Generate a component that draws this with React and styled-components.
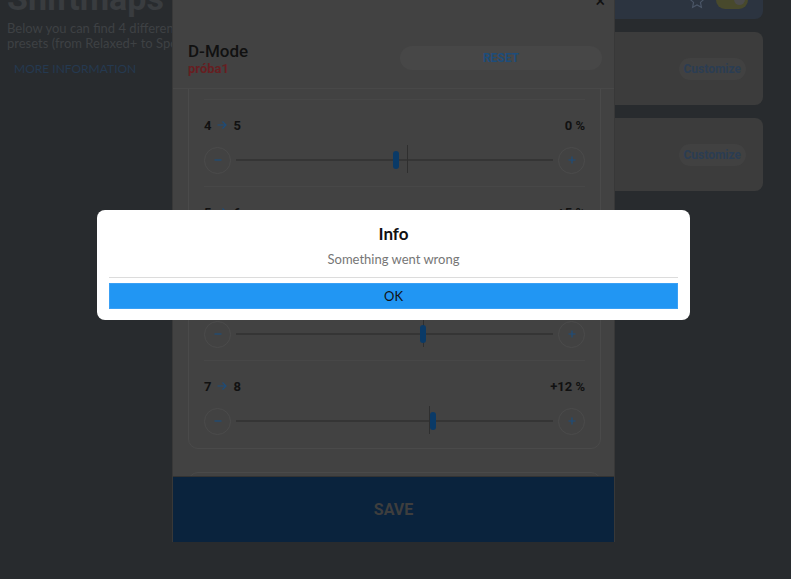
import React from "react";
import styled, { createGlobalStyle } from "styled-components";

const Global = createGlobalStyle`
  html, body { margin: 0; padding: 0; background: #282b2e; }
  #root { width: 791px; height: 579px; overflow: hidden; position: relative; }
`;

const Screen = styled.div`
  position: relative;
  width: 791px;
  height: 579px;
  overflow: hidden;
  background: #282b2e;
  font-family: Lato, "Open Sans", sans-serif;
`;

/* ---------- background page ---------- */
const Page = styled.div`
  display: grid;
  grid-template-columns: 196px 1fr;
  column-gap: 14px;
  padding: 0 28px 0 7px;
`;

const Intro = styled.div`
  display: flex;
  flex-direction: column;
  align-items: flex-start;
`;

const PageTitle = styled.h1`
  margin: -23px 0 0;
  font-family: Roboto, sans-serif;
  font-size: 34px;
  font-weight: 700;
  line-height: 42px;
  color: #393c3f;
`;

const IntroText = styled.p`
  margin: 2px 0 0;
  font-size: 13px;
  line-height: 15px;
  color: #3e4144;
`;

const MoreLink = styled.a`
  margin: 11px 0 0 7px;
  font-size: 12px;
  line-height: 14px;
  color: #253950;
  text-transform: uppercase;
`;

const Presets = styled.div`
  display: flex;
  flex-direction: column;
  gap: 13px;
  margin-top: -20px;
`;

const PresetCard = styled.div`
  height: ${(p) => (p.$active ? 39 : 73)}px;
  border-radius: 8px;
  background: ${(p) => (p.$active ? "#2c3440" : "#3c3c3c")};
  display: flex;
  align-items: ${(p) => (p.$active ? "flex-end" : "center")};
  justify-content: flex-end;
  gap: 10px;
  padding: 0 ${(p) => (p.$active ? 15 : 17)}px 0 0;
  box-sizing: border-box;
`;

const CustomizeButton = styled.button`
  border: none;
  height: 22px;
  padding: 0 5px;
  border-radius: 11px;
  background: #414141;
  color: #2b3d53;
  font-family: Roboto, sans-serif;
  font-weight: 700;
  font-size: 12px;
`;

const StarIcon = styled.svg`
  width: 18px;
  height: 18px;
  margin-bottom: 9px;
`;

const Toggle = styled.div`
  width: 32px;
  height: 18px;
  border-radius: 9px;
  background: #48492c;
  margin-bottom: 10px;
  position: relative;
  &::after {
    content: "";
    position: absolute;
    right: 3px;
    top: 3px;
    width: 11px;
    height: 11px;
    border-radius: 50%;
    background: #4b4b4b;
  }
`;

/* ---------- drawer ---------- */
const Drawer = styled.section`
  position: absolute;
  left: 172px;
  top: -20px;
  width: 443px;
  height: 562px;
  display: flex;
  flex-direction: column;
  background: #424242;
  border-left: 1px solid #383838;
  border-right: 1px solid #383838;
  box-sizing: border-box;
  font-family: Roboto, sans-serif;
  overflow: hidden;
`;

const DrawerHeader = styled.header`
  height: 109px;
  flex: none;
  box-sizing: border-box;
  padding: 0 12px 0 15px;
  display: flex;
  flex-direction: column;
  border-bottom: 1px solid #484848;
`;

const CloseRow = styled.div`
  display: flex;
  justify-content: flex-end;
  height: 61px;
`;

const CloseButton = styled.span`
  font-size: 18px;
  line-height: 18px;
  color: #111;
  margin-top: 12px;
  margin-right: -3px;
`;

const TitleRow = styled.div`
  display: flex;
  align-items: center;
  justify-content: space-between;
`;

const TitleBlock = styled.div`
  display: flex;
  flex-direction: column;
`;

const DrawerTitle = styled.h2`
  margin: 0;
  font-size: 17px;
  font-weight: 500;
  line-height: 20px;
  color: #111;
`;

const Subtitle = styled.span`
  font-size: 13px;
  font-weight: 700;
  line-height: 16px;
  color: #661e21;
`;

const ResetButton = styled.button`
  width: 202px;
  height: 24px;
  border: none;
  border-radius: 12px;
  background: #474747;
  color: #1d4d7b;
  font-family: Roboto, sans-serif;
  font-weight: 700;
  font-size: 12px;
  margin-top: -2px;
`;

const ScrollArea = styled.div`
  flex: 1;
  overflow: hidden;
  padding: 0 13px 0 15px;
`;

const ListCard = styled.div`
  border: 1px solid #4a4a4a;
  border-radius: 10px;
  padding: 0 15px;
  margin-top: ${(p) => p.$offset}px;
`;

const Row = styled.div`
  height: 86px;
  display: flex;
  flex-direction: column;
  border-bottom: 1px solid #474747;
  &:last-child { border-bottom: none; height: 87px; }
`;

const LabelRow = styled.div`
  display: flex;
  justify-content: space-between;
  align-items: center;
  height: 16px;
  margin-top: 17px;
  font-size: 13px;
  font-weight: 700;
  color: #111;
`;

const Gears = styled.span`
  display: flex;
  align-items: center;
  gap: 6px;
`;

const Arrow = styled.svg`
  width: 10px;
  height: 10px;
`;

const SliderRow = styled.div`
  display: flex;
  align-items: center;
  margin-top: 13px;
  height: 28px;
`;

const RoundButton = styled.button`
  width: 27px;
  height: 27px;
  box-sizing: border-box;
  border-radius: 50%;
  border: 1px solid #4b4b4b;
  background: transparent;
  padding: 0;
  display: flex;
  align-items: center;
  justify-content: center;
  flex: none;
`;

const Track = styled.div`
  flex: 1;
  height: 2px;
  margin: 0 5px;
  background: #353535;
  position: relative;
`;

const Tick = styled.div`
  position: absolute;
  top: -14px;
  width: 1px;
  height: 28px;
  background: #2f2f2f;
`;

const Thumb = styled.div`
  position: absolute;
  top: -8px;
  width: 6px;
  height: 18px;
  margin-left: -3px;
  border-radius: 3px;
  background: #0a3a67;
`;

const NextCard = styled.div`
  height: 40px;
  margin-top: 23px;
  border: 1px solid #4a4a4a;
  border-radius: 10px;
`;

const SaveBar = styled.button`
  flex: none;
  height: 66px;
  border: none;
  border-top: 1px solid #333;
  background: #0a233d;
  color: #3e3e3e;
  font-family: Roboto, sans-serif;
  font-weight: 700;
  font-size: 16px;
`;

/* ---------- dialog ---------- */
const Dialog = styled.div`
  position: absolute;
  left: 97px;
  top: 210px;
  width: 593px;
  height: 110px;
  box-sizing: border-box;
  background: #fff;
  border-radius: 8px;
  padding: 13px 12px 0;
  display: flex;
  flex-direction: column;
  align-items: stretch;
  font-family: Lato, "Open Sans", sans-serif;
`;

const DialogTitle = styled.h3`
  margin: 0;
  text-align: center;
  font-size: 17px;
  line-height: 22px;
  font-weight: 700;
  color: #111;
`;

const DialogText = styled.p`
  margin: 5px 0 0;
  text-align: center;
  font-size: 13px;
  line-height: 18px;
  color: #767676;
`;

const Divider = styled.hr`
  margin: 9px 0 0;
  border: none;
  border-top: 1px solid #dcdcdc;
`;

const OkButton = styled.button`
  margin-top: 5px;
  height: 26px;
  border: 1px solid #3aa0f5;
  background: #2196f3;
  color: #111;
  font-family: Lato, "Open Sans", sans-serif;
  font-size: 13px;
`;

const rows = [
  { from: 3, to: 4, value: "0 %", thumb: 50, tick: 50 },
  { from: 4, to: 5, value: "0 %", thumb: 50.6, tick: 54 },
  { from: 5, to: 6, value: "+5 %", thumb: 55, tick: 55 },
  { from: 6, to: 7, value: "+9 %", thumb: 59, tick: 59 },
  { from: 7, to: 8, value: "+12 %", thumb: 62, tick: 61 },
];

const ArrowIcon = () => (
  <Arrow viewBox="0 0 10 10" fill="none" stroke="#1d4d7b" strokeWidth="1.2">
    <path d="M0.5 5h8.5M5.5 1.5 9 5l-3.5 3.5" />
  </Arrow>
);

const Minus = () => (
  <svg width="10" height="10" viewBox="0 0 10 10" stroke="#1d4d7b" strokeWidth="1.2">
    <path d="M1.5 5h7" />
  </svg>
);
const Plus = () => (
  <svg width="10" height="10" viewBox="0 0 10 10" stroke="#1d4d7b" strokeWidth="1.2">
    <path d="M1.5 5h7M5 1.5v7" />
  </svg>
);

export default function App() {
  return (
    <Screen>
      <Global />
      <Page>
        <Intro>
          <PageTitle>Shiftmaps</PageTitle>
          <IntroText>
            Below you can find 4 different presets (from Relaxed+ to Sport+)
          </IntroText>
          <MoreLink>More information</MoreLink>
        </Intro>
        <Presets>
          <PresetCard $active>
            <StarIcon viewBox="0 0 24 24" fill="none" stroke="#4a5566" strokeWidth="1.6">
              <path d="M12 2.5l2.9 6.1 6.6.8-4.9 4.5 1.3 6.6L12 17.2l-5.9 3.3 1.3-6.6-4.9-4.5 6.6-.8z" />
            </StarIcon>
            <Toggle />
          </PresetCard>
          <PresetCard>
            <CustomizeButton>Customize</CustomizeButton>
          </PresetCard>
          <PresetCard>
            <CustomizeButton>Customize</CustomizeButton>
          </PresetCard>
        </Presets>
      </Page>

      <Drawer>
        <DrawerHeader>
          <CloseRow>
            <CloseButton>×</CloseButton>
          </CloseRow>
          <TitleRow>
            <TitleBlock>
              <DrawerTitle>D-Mode</DrawerTitle>
              <Subtitle>próba1</Subtitle>
            </TitleBlock>
            <ResetButton>RESET</ResetButton>
          </TitleRow>
        </DrawerHeader>
        <ScrollArea>
          <ListCard $offset={-77}>
            {rows.map((r) => (
              <Row key={r.from}>
                <LabelRow>
                  <Gears>
                    {r.from}
                    <ArrowIcon />
                    {r.to}
                  </Gears>
                  <span>{r.value}</span>
                </LabelRow>
                <SliderRow>
                  <RoundButton>
                    <Minus />
                  </RoundButton>
                  <Track>
                    <Tick style={{ left: `${r.tick}%` }} />
                    <Thumb style={{ left: `${r.thumb}%` }} />
                  </Track>
                  <RoundButton>
                    <Plus />
                  </RoundButton>
                </SliderRow>
              </Row>
            ))}
          </ListCard>
          <NextCard />
        </ScrollArea>
        <SaveBar>SAVE</SaveBar>
      </Drawer>

      <Dialog>
        <DialogTitle>Info</DialogTitle>
        <DialogText>Something went wrong</DialogText>
        <Divider />
        <OkButton>OK</OkButton>
      </Dialog>
    </Screen>
  );
}
